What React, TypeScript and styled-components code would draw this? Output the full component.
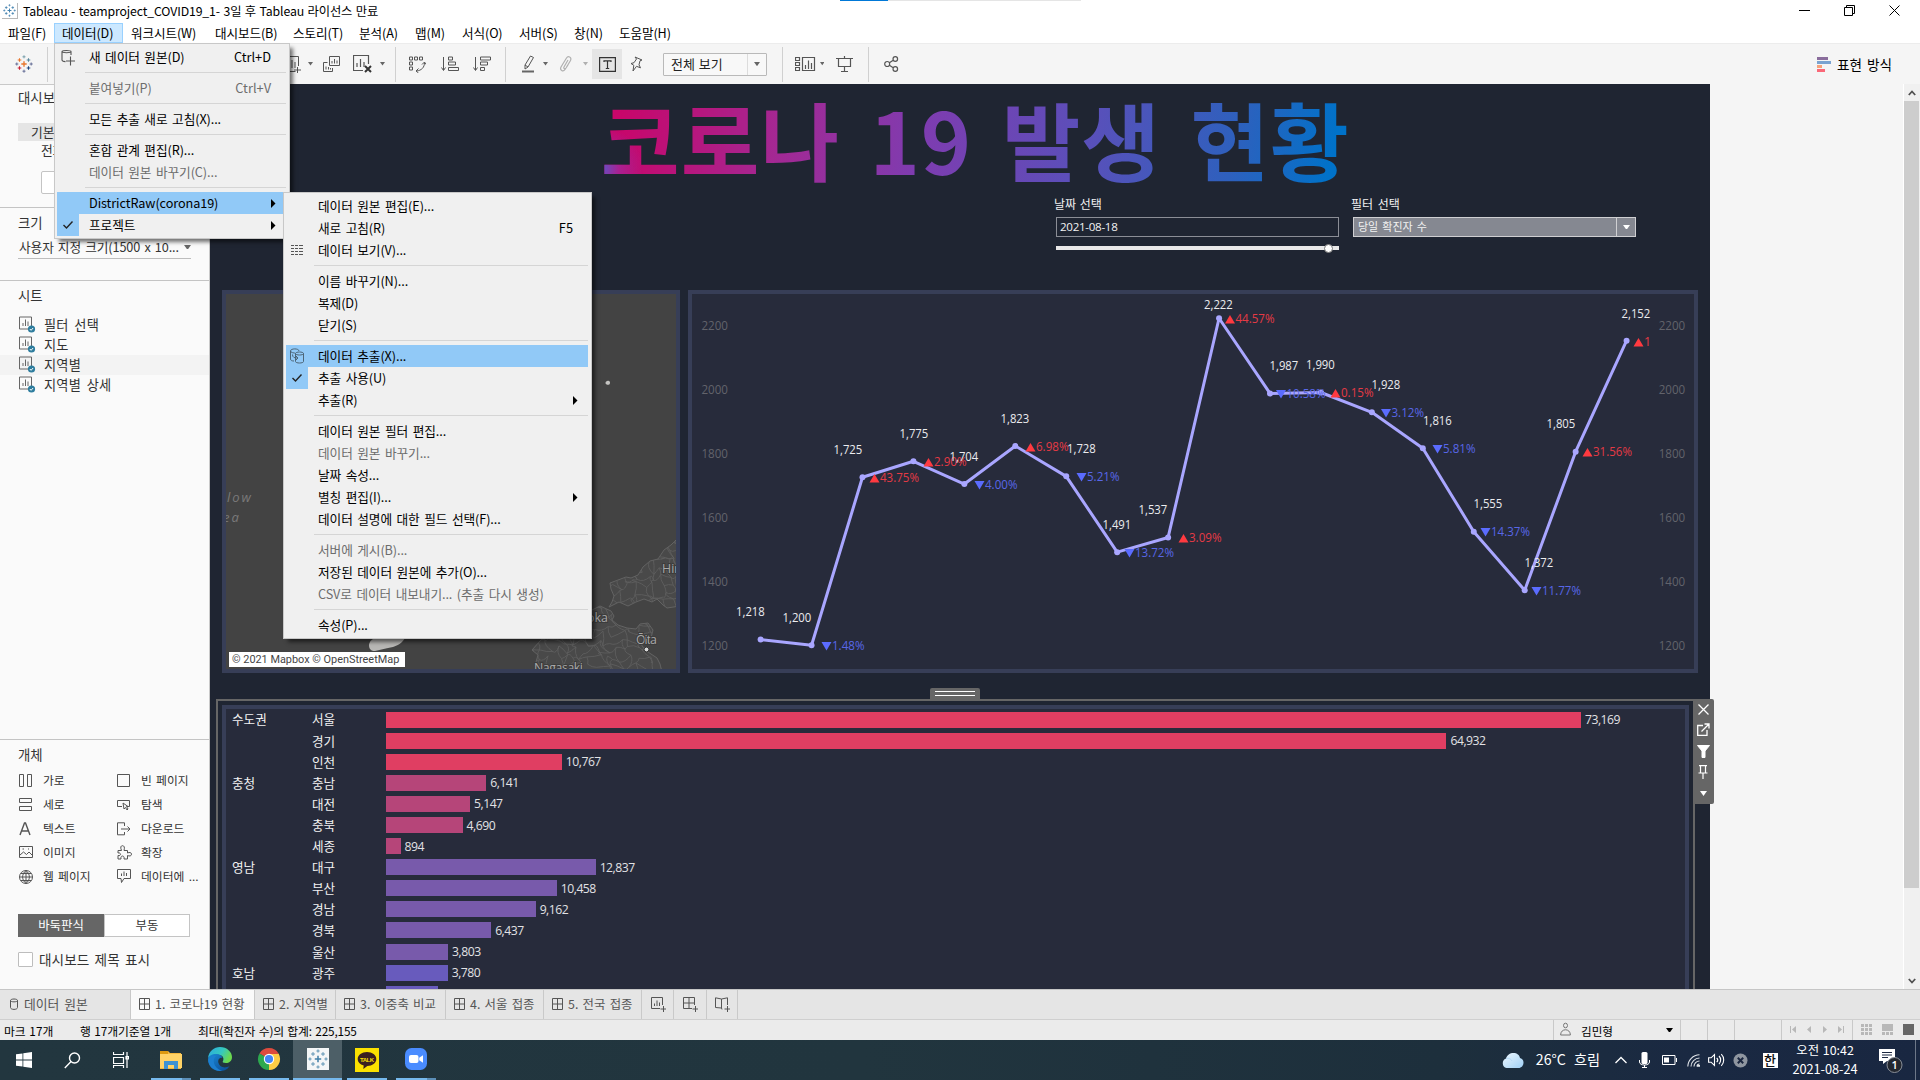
import React from "react";
import styled, { createGlobalStyle, css } from "styled-components";

const KR = `"Noto Sans CJK KR", "Open Sans", sans-serif`;
const NUM = `"Open Sans", "Noto Sans CJK KR", sans-serif`;

const Global = createGlobalStyle`
  * { box-sizing: border-box; }
  body { margin: 0; overflow: hidden; background: #fff; font-family: ${KR}; font-size: 13px; color: #000; }
  svg { display: block; flex: none; }
`;

const Screen = styled.div`
  position: relative;
  width: 1920px;
  height: 1080px;
  overflow: hidden;
  display: flex;
  flex-direction: column;
  white-space: nowrap;
`;

const Text = styled.span<{ $size?: number; $ls?: number; $ws?: number; $color?: string }>`
  font-size: ${(p) => p.$size ?? 13}px;
  letter-spacing: ${(p) => p.$ls ?? 0}px;
  word-spacing: ${(p) => p.$ws ?? 1}px;
  color: ${(p) => p.$color ?? "inherit"};
  line-height: 1.2;
  white-space: pre;
`;

/* ---------- title and menu bar ---------- */

const TitleBar = styled.header`
  height: 23px;
  flex: none;
  display: flex;
  align-items: center;
  background: #fff;
  padding: 0 0 1px 2px;
  gap: 5px;
`;
const LoadBar = styled.div`
  position: absolute;
  left: 840px;
  top: 0;
  width: 241px;
  height: 1px;
  background: linear-gradient(90deg, #0078d7 48px, #e5e5e5 48px);
`;
const WindowButtons = styled.div`
  margin-left: auto;
  display: flex;
  gap: 34px;
  padding: 0 20px 2px 0;
`;
const AppIcon = styled.div`
  padding: 1px;
  border-right: 1px solid #b8b8b8;
  border-bottom: 1px solid #b8b8b8;
`;
const MenuBar = styled.nav`
  height: 20px;
  flex: none;
  display: flex;
  background: #fff;
`;
const MenuTitle = styled.div<{ $w: number; $open?: boolean }>`
  width: ${(p) => p.$w}px;
  display: flex;
  align-items: center;
  padding-left: ${(p) => (p.$open ? 7 : 8)}px;
  ${(p) => p.$open && css`background: #cce8ff; border: 1px solid #99d1ff;`}
`;

/* ---------- toolbar ---------- */

const Toolbar = styled.div`
  height: 41px;
  flex: none;
  display: flex;
  align-items: center;
  background: #f5f5f5;
  border-top: 1px solid #ececec;
`;
const Tool = styled.div<{ $w: number; $active?: boolean }>`
  width: ${(p) => p.$w}px;
  height: 30px;
  flex: none;
  display: flex;
  align-items: center;
  justify-content: center;
  background: ${(p) => (p.$active ? "#e5e5e5" : "transparent")};
`;
const Rule = styled.div`
  width: 1px;
  height: 35px;
  flex: none;
  background: #d0d0d0;
`;
const ViewSelect = styled.div`
  width: 104px;
  height: 23px;
  flex: none;
  display: flex;
  align-items: center;
  justify-content: space-between;
  padding-left: 7px;
  border: 1px solid #b9b9b9;
  border-radius: 1px;
  background: #f8f8f8;
  color: #222;
`;
const SelectArrow = styled.div`
  width: 19px;
  height: 100%;
  display: flex;
  align-items: center;
  justify-content: center;
  border-left: 1px solid #dcdcdc;
`;
const ShowMe = styled.div`
  margin-left: auto;
  display: flex;
  align-items: center;
  gap: 6px;
  padding-right: 28px;
`;

/* ---------- sidebar ---------- */

const Main = styled.div`
  height: 905px;
  flex: none;
  display: flex;
  background: #f5f5f5;
`;
const Sidebar = styled.aside`
  width: 210px;
  flex: none;
  display: flex;
  flex-direction: column;
  background: #fafafa;
  border-right: 1px solid #c9c9c9;
  border-top: 1px solid #c9c9c9;
  color: #333;
`;
const Section = styled.section<{ $h: number }>`
  height: ${(p) => p.$h}px;
  flex: none;
  border-bottom: 1px solid #c4c4c4;
`;
const SectionTitle = styled.div<{ $h: number; $x?: number; $gap?: number }>`
  height: ${(p) => p.$h}px;
  display: flex;
  align-items: center;
  padding-left: ${(p) => p.$x ?? 18}px;
  margin-bottom: ${(p) => p.$gap ?? 0}px;
`;
const DeviceTab = styled.div`
  margin-left: 18px;
  width: 172px;
  height: 18px;
  display: flex;
  align-items: center;
  padding-left: 13px;
  background: #e5e5e5;
`;
const DeviceRow = styled.div`
  height: 17px;
  display: flex;
  align-items: center;
  padding-left: 41px;
`;
const DeviceButton = styled.div`
  margin: 13px 0 0 41px;
  width: 128px;
  height: 23px;
  border: 1px solid #c4c4c4;
  border-radius: 2px;
  background: #fff;
`;
const SizeSelect = styled.div`
  margin: 0 18px 0 18px;
  height: 20px;
  display: flex;
  align-items: center;
  justify-content: space-between;
  padding: 0 0 3px 1px;
  border-bottom: 1px solid #bdbdbd;
`;
const SheetRow = styled.div<{ $hover?: boolean }>`
  height: 20px;
  display: flex;
  align-items: center;
  gap: 8px;
  padding: 0 0 1px 19px;
  background: ${(p) => (p.$hover ? "#f3f3f3" : "transparent")};
`;
const ObjectGrid = styled.div`
  display: grid;
  grid-template-columns: 98px 92px;
  grid-auto-rows: 24px;
  padding-left: 19px;
`;
const ObjectItem = styled.div`
  display: grid;
  grid-template-columns: 24px 1fr;
  align-items: center;
  padding-bottom: 1px;
`;
const Toggle = styled.div`
  display: flex;
  margin: 25px 0 0 18px;
  width: 172px;
  height: 23px;
`;
const ToggleHalf = styled.div<{ $on?: boolean }>`
  flex: 1;
  display: flex;
  align-items: center;
  justify-content: center;
  border: 1px solid ${(p) => (p.$on ? "#666" : "#c4c4c4")};
  background: ${(p) => (p.$on ? "#666" : "#fff")};
  color: ${(p) => (p.$on ? "#fff" : "#333")};
`;
const CheckRow = styled.div`
  display: flex;
  align-items: center;
  gap: 6px;
  margin: 14px 0 0 18px;
`;
const CheckBox = styled.div`
  width: 15px;
  height: 15px;
  border: 1px solid #bdbdbd;
  border-radius: 1px;
  background: #fff;
`;

/* ---------- dashboard canvas ---------- */

const Canvas = styled.main`
  position: relative;
  width: 1500px;
  flex: none;
  display: flex;
  flex-direction: column;
  background: #1f2532;
`;
const Heading = styled.h1`
  margin: 0;
  height: 112px;
  padding: 6px 0 0 391px;
  font: 700 85.5px/96px ${KR};
  letter-spacing: 1px;
  word-spacing: 9px;
  span {
    display: inline-block;
    color: transparent;
    background: radial-gradient(circle at 0 78px, #5c55c8 0, rgba(150, 50, 170, 0.6) 18px, transparent 42px),
      linear-gradient(100deg, #c8066a 3%, #a42893 24%, #7e3cb0 43%, #5950ba 65%, #2e60bd 84%, #0072c9 97%);
    -webkit-background-clip: text;
    background-clip: text;
  }
`;
const Filters = styled.div`
  height: 94px;
  display: flex;
  gap: 14px;
  padding-left: 846px;
  color: #f2f2f2;
`;
const FilterBlock = styled.div`
  width: 283px;
  display: flex;
  flex-direction: column;
`;
const FilterLabel = styled.div`
  height: 21px;
  line-height: 16px;
  margin-left: -2px;
`;
const DateBox = styled.div`
  height: 20px;
  display: flex;
  align-items: center;
  padding: 0 0 1px 3px;
  border: 1px solid #8b8e96;
  font: 11.6px ${NUM};
  letter-spacing: -0.3px;
`;
const SliderTrack = styled.div`
  margin-top: 9px;
  height: 4px;
  display: flex;
  align-items: center;
  justify-content: flex-end;
  padding-right: 6px;
  background: #e8e8e8;
`;
const SliderThumb = styled.div`
  width: 9px;
  height: 9px;
  border: 1px solid #777;
  border-radius: 50%;
  background: #fff;
`;
const DropBox = styled.div`
  height: 20px;
  display: flex;
  align-items: center;
  justify-content: space-between;
  padding-left: 4px;
  border: 1px solid #cfcfd2;
  background: #858891;
`;
const DropArrow = styled.div`
  width: 19px;
  height: 100%;
  display: flex;
  align-items: center;
  justify-content: center;
  border-left: 1px solid #cfcfd2;
`;
const PanelRow = styled.div`
  display: flex;
  gap: 8px;
  padding-left: 12px;
  height: 383px;
  flex: none;
`;
const Panel = styled.section<{ $w: number; $bg: string }>`
  position: relative;
  width: ${(p) => p.$w}px;
  height: 383px;
  border: 4px solid #373e57;
  background: ${(p) => p.$bg};
  overflow: hidden;
`;
const Attribution = styled.div`
  position: absolute;
  left: 3px;
  bottom: 2px;
  width: 176px;
  height: 15px;
  padding-left: 3px;
  background: #fff;
  color: #444;
  font: 10.9px/15px Roboto, "Liberation Sans", sans-serif;
`;
const Selected = styled.section`
  position: relative;
  margin: 26px 0 0 6px;
  width: 1479px;
  flex: 1;
  border: 2px solid #666;
  border-bottom: 0;
  padding: 4px 4px 0;
  display: flex;
  min-height: 0;
`;
const Grip = styled.div`
  position: absolute;
  left: 712px;
  top: -13px;
  width: 50px;
  height: 12px;
  border-radius: 2px 2px 0 0;
  background: #666;
  display: flex;
  flex-direction: column;
  gap: 3px;
  padding: 3px 5px;
`;
const GripLine = styled.i`
  height: 1px;
  flex: none;
  background: #fff;
`;
const FloatBar = styled.div`
  position: absolute;
  left: 1475px;
  top: -2px;
  width: 21px;
  height: 105px;
  border-radius: 0 2px 2px 0;
  background: #666;
  display: flex;
  flex-direction: column;
  align-items: center;
  z-index: 1;
`;
const FloatSlot = styled.div`
  height: 21px;
  display: flex;
  align-items: center;
  padding-right: 1px;
`;
const BarPanel = styled.div`
  flex: 1;
  border: 4px solid #373e57;
  border-bottom: 0;
  background: #272b3b;
  overflow: hidden;
  color: #f2f2f2;
`;
const BarRow = styled.div`
  height: 21.1px;
  display: grid;
  grid-template-columns: 80px 80px 1fr;
  padding-left: 6px;
`;
const BarName = styled.div`
  display: flex;
  align-items: center;
  padding-bottom: 1px;
`;
const BarCell = styled.div`
  display: flex;
  align-items: center;
  gap: 4px;
  margin-left: -6px;
  font: 12.2px ${NUM};
  letter-spacing: -0.5px;
  color: #e2e2e5;
`;
const Bar = styled.div`
  height: 16px;
  flex: none;
`;

const Blank = styled.div`
  flex: 1;
`;
const ScrollBar = styled.div`
  width: 17px;
  flex: none;
  display: flex;
  flex-direction: column;
  align-items: center;
  background: #f0f0f0;
  border-left: 1px solid #fff;
  padding-right: 1px;
`;
const ScrollArrow = styled.div`
  height: 17px;
  display: flex;
  align-items: center;
`;
const ScrollThumb = styled.div`
  width: 15px;
  height: 787px;
  background: #cdcdcd;
`;

/* ---------- tabs and status ---------- */

const Tabs = styled.div`
  height: 31px;
  flex: none;
  display: flex;
  background: #e5e5e5;
  border-top: 1px solid #c6c6c6;
  border-bottom: 1px solid #cfcfcf;
  color: #555;
`;
const Tab = styled.div<{ $w: number; $on?: boolean; $pad?: number; $gap?: number }>`
  width: ${(p) => p.$w}px;
  display: flex;
  align-items: center;
  gap: ${(p) => p.$gap ?? 5}px;
  padding: 0 0 1px ${(p) => p.$pad ?? 8}px;
  border-right: 1px solid #c9c9c9;
  background: ${(p) => (p.$on ? "#fafafa" : "transparent")};
`;
const Status = styled.div`
  height: 20px;
  flex: none;
  display: flex;
  align-items: center;
  background: #ebebeb;
`;
const StatusText = styled.div<{ $w: number }>`
  width: ${(p) => p.$w}px;
`;
const StatusCell = styled.div<{ $w: number; $pad?: number; $gap?: number }>`
  width: ${(p) => p.$w}px;
  height: 20px;
  display: flex;
  align-items: center;
  gap: ${(p) => p.$gap ?? 0}px;
  padding-left: ${(p) => p.$pad ?? 0}px;
  border-left: 1px solid #c9c9c9;
`;

/* ---------- taskbar ---------- */

const TaskBar = styled.footer`
  height: 40px;
  flex: none;
  display: flex;
  color: #fff;
  background: linear-gradient(90deg, #22363f 0%, #21353e 45%, #1d2f3c 75%, #1a2942 88%, #192741 100%);
`;
const TaskSlot = styled.div<{ $w: number; $pad?: number }>`
  width: ${(p) => p.$w}px;
  display: flex;
  align-items: center;
  justify-content: center;
  padding-left: ${(p) => p.$pad ?? 0}px;
`;
const AppSlot = styled.div<{ $on?: boolean; $split?: boolean }>`
  width: 49px;
  height: 40px;
  display: flex;
  flex-direction: column;
  align-items: center;
  justify-content: space-between;
  padding-top: 6px;
  background: ${(p) => (p.$on ? "#4d5f67" : "transparent")};
  &::after {
    content: "";
    width: ${(p) => (p.$on ? 49 : 40)}px;
    height: 2px;
    background: ${(p) => (p.$split ? "linear-gradient(90deg, #76b9ed 31px, #5c8fb8 31px)" : "#76b9ed")};
  }
`;
const Tray = styled.div`
  margin-left: auto;
  display: flex;
`;
const Clock = styled.div`
  width: 70px;
  display: flex;
  flex-direction: column;
  align-items: center;
  justify-content: center;
  gap: 3px;
  padding-bottom: 1px;
`;
const ImeBox = styled.div`
  width: 15px;
  height: 15px;
  background: #fff;
  color: #111;
  font: 500 13px/14px ${KR};
  text-align: center;
`;
const ShowDesktop = styled.div`
  width: 5px;
  border-left: 1px solid #6d7788;
`;

/* ---------- drop-down menus ---------- */

const Popup = styled.div<{ $x: number; $y: number; $w: number }>`
  position: absolute;
  left: ${(p) => p.$x}px;
  top: ${(p) => p.$y}px;
  width: ${(p) => p.$w}px;
  padding: 2px;
  border: 1px solid #c8c8c8;
  background: #f0f0f0;
  box-shadow: 4px 4px 4px -1px rgba(0, 0, 0, 0.55);
  z-index: 5;
`;
const Item = styled.div<{ $on?: boolean; $off?: boolean; $sub?: boolean }>`
  height: 22px;
  display: grid;
  grid-template-columns: 22px 10px 1fr auto;
  align-items: center;
  padding-right: ${(p) => (p.$sub ? 10 : 15)}px;
  margin-right: 1px;
  background: ${(p) => (p.$on ? "#91c9f7" : "transparent")};
  color: ${(p) => (p.$off ? "#6d6d6d" : "#000")};
`;
const IconCell = styled.div<{ $on?: boolean }>`
  height: 22px;
  display: flex;
  align-items: center;
  justify-content: center;
  background: ${(p) => (p.$on ? "#91c9f7" : "transparent")};
`;
const ItemText = styled(Text)`
  grid-column: 3;
`;
const Separator = styled.div`
  height: 9px;
  padding: 4px 1px 4px 28px;
  &::after {
    content: "";
    display: block;
    height: 1px;
    background: #d5d5d5;
  }
`;

/* ---------- small drawings ---------- */

const Caret = ({ color = "#666", s = 6 }: { color?: string; s?: number }) => (
  <svg width={s} height={s * 0.7} viewBox="0 0 10 7">
    <path d="M0 0h10L5 7z" fill={color} />
  </svg>
);

const Plus = ({ x, y, r, c, w = 1 }: { x: number; y: number; r: number; c: string; w?: number }) => (
  <path d={`M${x - r} ${y}h${2 * r}M${x} ${y - r}v${2 * r}`} stroke={c} strokeWidth={w} />
);

const TableauMark = ({ size, mono }: { size: number; mono?: string }) => (
  <svg width={size} height={size} viewBox="0 0 20 20">
    <Plus x={10} y={10} r={3} c={mono ?? "#e8762c"} w={1.5} />
    <Plus x={5} y={5.5} r={2} c={mono ?? "#e8762c"} w={1.2} />
    <Plus x={15} y={5.5} r={2} c={mono ?? "#59879b"} w={1.2} />
    <Plus x={5} y={14.5} r={2} c={mono ?? "#c72035"} w={1.2} />
    <Plus x={15} y={14.5} r={2} c={mono ?? "#1f457e"} w={1.2} />
    <Plus x={10} y={2} r={1.7} c={mono ?? "#7199a6"} />
    <Plus x={10} y={18} r={1.7} c={mono ?? "#5b6591"} />
    <Plus x={2} y={10} r={1.7} c={mono ?? "#5b6591"} />
    <Plus x={18} y={10} r={1.7} c={mono ?? "#5b6591"} />
  </svg>
);

const Line = ({ w, h, d, c = "#555", sw = 1, fill = "none" }: { w: number; h: number; d: string; c?: string; sw?: number; fill?: string }) => (
  <svg width={w} height={h} viewBox={`0 0 ${w} ${h}`}>
    <path d={d} fill={fill} stroke={c} strokeWidth={sw} />
  </svg>
);

const Check = () => <Line w={12} h={10} c="#222" sw={1.4} d="M1.500 5l3 3L10.500 1.500" />;
const Arrow = () => (
  <svg width="5" height="9" viewBox="0 0 5 9">
    <path d="M0 0l4.500 4.500L0 9z" />
  </svg>
);

const SheetIcon = () => (
  <svg width="17" height="17" viewBox="0 0 17 17">
    <path d="M.5 1h12v12H.5zM4 10V7M6.500 10V3.500M9 10V5.500" fill="none" stroke="#666" />
    <circle cx="12.500" cy="13" r="3.600" fill="#2e7d9e" />
    <path d="M10.800 13l1.300 1.300 2-2.300" fill="none" stroke="#fff" />
  </svg>
);
const GridIcon = () => <Line w={11} h={12} d="M.5 .5h10v11H.5zM5.500 .5v11M.5 6h10" c="#555" />;

/* ---------- data ---------- */

const menuTitles: [string, number][] = [
  ["파일(F)", 54], ["데이터(D)", 69], ["워크시트(W)", 84], ["대시보드(B)", 78], ["스토리(T)", 66], ["분석(A)", 56],
  ["맵(M)", 47], ["서식(O)", 57], ["서버(S)", 55], ["창(N)", 45], ["도움말(H)", 70],
];

type Entry = { t: string; key?: string; off?: boolean; on?: boolean; icon?: React.ReactNode; sel?: boolean; sub?: boolean } | null;

const dataMenu: Entry[] = [
  { t: "새 데이터 원본(D)", key: "Ctrl+D", icon: <Line w={14} h={17} c="#555" sw={1.1} d="M10 6V2.500C10 1.200 1 1.200 1 2.500V11c0 1 1.500 1.500 3.500 1.600M1 2.600c0 1.500 9 1.500 9 0M9.500 7.500v9M5 12h9" /> },
  null,
  { t: "붙여넣기(P)", key: "Ctrl+V", off: true },
  null,
  { t: "모든 추출 새로 고침(X)..." },
  null,
  { t: "혼합 관계 편집(R)..." },
  { t: "데이터 원본 바꾸기(C)...", off: true },
  null,
  { t: "DistrictRaw(corona19)", on: true, sub: true },
  { t: "프로젝트", icon: <Check />, sel: true, sub: true },
];

const sourceMenu: Entry[] = [
  { t: "데이터 원본 편집(E)..." },
  { t: "새로 고침(R)", key: "F5" },
  { t: "데이터 보기(V)...", icon: <Line w={12} h={10} c="#555" d="M0 .5h3M4 .5h3M8 .5h4M0 3.500h3M4 3.500h3M8 3.500h4M0 6.500h3M4 6.500h3M8 6.500h4M0 9.500h3M4 9.500h3M8 9.500h4" /> },
  null,
  { t: "이름 바꾸기(N)..." },
  { t: "복제(D)" },
  { t: "닫기(S)" },
  null,
  { t: "데이터 추출(X)...", on: true, icon: <Line w={14} h={16} c="#4d6577" d="M9 3C9 .2 .5 .2 .5 3v8c0 1.500 1.500 2 3.500 2M.5 3C.5 5 5 5 5 5M5.500 5.500c0-2 8-2 8 0v8c0 2-8 2-8 0zM5.500 5.500c0 2 8 2 8 0M2.500 6.500c0 3 2 3.500 5 3.500M6 8l2 2-2 2" /> },
  { t: "추출 사용(U)", icon: <Check />, sel: true },
  { t: "추출(R)", sub: true },
  null,
  { t: "데이터 원본 필터 편집..." },
  { t: "데이터 원본 바꾸기...", off: true },
  { t: "날짜 속성..." },
  { t: "별칭 편집(I)...", sub: true },
  { t: "데이터 설명에 대한 필드 선택(F)..." },
  null,
  { t: "서버에 게시(B)...", off: true },
  { t: "저장된 데이터 원본에 추가(O)..." },
  { t: "CSV로 데이터 내보내기... (추출 다시 생성)", off: true },
  null,
  { t: "속성(P)..." },
];

const bars: [string, string, number, string][] = [
  ["수도권", "서울", 73169, "#e03e62"],
  ["", "경기", 64932, "#e03e62"],
  ["", "인천", 10767, "#e03e62"],
  ["충청", "충남", 6141, "#b64579"],
  ["", "대전", 5147, "#b64579"],
  ["", "충북", 4690, "#b64579"],
  ["", "세종", 894, "#b64579"],
  ["영남", "대구", 12837, "#785aab"],
  ["", "부산", 10458, "#785aab"],
  ["", "경남", 9162, "#785aab"],
  ["", "경북", 6437, "#785aab"],
  ["", "울산", 3803, "#785aab"],
  ["호남", "광주", 3780, "#685bbd"],
  ["", "", 3184, "#685bbd"],
];

// value, label x/y, change text, change x/y
const series: [number, number, number, string, number, number][] = [
  [1218, 736, 612, "", 0, 0],
  [1200, 782.5, 618, "▼1.48%", 822, 646],
  [1725, 833.5, 450, "▲43.75%", 870, 478],
  [1775, 899.5, 434, "▲2.90%", 924, 462],
  [1704, 949.5, 457, "▼4.00%", 975, 485],
  [1823, 1000.5, 419, "▲6.98%", 1026, 447],
  [1728, 1067, 449, "▼5.21%", 1077, 477],
  [1491, 1102.5, 525, "▼13.72%", 1125, 553],
  [1537, 1138.5, 510, "▲3.09%", 1179, 538],
  [2222, 1204, 305, "▲44.57%", 1225.5, 319],
  [1987, 1269.5, 366, "▼10.58%", 1276.5, 394],
  [1990, 1306, 365, "▲0.15%", 1331, 393],
  [1928, 1371.5, 385, "▼3.12%", 1381.5, 413],
  [1816, 1423, 421, "▼5.81%", 1433, 449],
  [1555, 1473.5, 504, "▼14.37%", 1481, 532],
  [1372, 1524.5, 563, "▼11.77%", 1532, 591],
  [1805, 1546.5, 424, "▲31.56%", 1583, 452],
  [2152, 1621.5, 314, "▲1", 1634, 342],
];

const pointX = (i: number) => 760.6 + i * 50.94;
const pointY = (v: number) => 645.3 - (v - 1200) * 0.32;

const ChartText = styled.text<{ $c: string }>`
  font: 12.3px ${NUM};
  fill: ${(p) => p.$c};
`;

const TrendChart = () => (
  <svg width="1002" height="375" viewBox="692 294 1002 375">
    {[2200, 2000, 1800, 1600, 1400, 1200].map((v) => (
      <g key={v}>
        <ChartText $c="#62636b" x={701.5} y={pointY(v) + 4.7} textLength={26.5} lengthAdjust="spacingAndGlyphs">{v}</ChartText>
        <ChartText $c="#62636b" x={1658.7} y={pointY(v) + 4.7} textLength={26.5} lengthAdjust="spacingAndGlyphs">{v}</ChartText>
      </g>
    ))}
    <polyline
      fill="none"
      stroke="#a9a6ff"
      strokeWidth="3"
      strokeLinejoin="round"
      points={series.map((s, i) => `${pointX(i)},${pointY(s[0])}`).join(" ")}
    />
    {series.map((s, i) => (
      <circle key={i} cx={pointX(i)} cy={pointY(s[0])} r="3" fill="#a9a6ff" />
    ))}
    {series.map(([v, x, y, change, cx, cy], i) => {
      const up = change[0] === "▲";
      const c = up ? "#e53a45" : "#5867e8";
      return (
        <g key={i}>
          {change && (
            <>
              <path d={up ? `M${cx - 0.5} ${cy + 4.500}h10l-5-8.500z` : `M${cx - 0.5} ${cy - 4}h10l-5 8.500z`} fill={up ? "#ff3a40" : "#5b6cff"} />
              <ChartText
                $c={c}
                x={cx + 10}
                y={cy + 4.3}
                textLength={change.length === 7 ? 39 : change.length === 6 ? 32.5 : undefined}
                lengthAdjust="spacingAndGlyphs"
              >
                {change.slice(1)}
              </ChartText>
            </>
          )}
          <ChartText $c="#ececef" x={x} y={y + 4} textLength={28.8} lengthAdjust="spacingAndGlyphs">
            {v.toLocaleString("en-US")}
          </ChartText>
        </g>
      );
    })}
  </svg>
);

// Deterministic jitter for the road mesh of the map.
const noise = (a: number, b: number) => {
  const n = Math.sin(a * 127.1 + b * 311.7) * 43758.5453;
  return n - Math.floor(n) - 0.5;
};
const roads = (() => {
  const step = 8;
  const at = (i: number, j: number) => [510 + i * step + noise(i, j) * 9, 530 + j * step + noise(j + 40, i) * 9];
  let d = "";
  for (let i = 0; i < 23; i++)
    for (let j = 0; j < 19; j++) {
      const [x, y] = at(i, j);
      if (noise(i, j + 90) > -0.3) {
        const [a, b] = at(i + 1, j);
        d += `M${x.toFixed(1)} ${y.toFixed(1)}Q${((x + a) / 2).toFixed(1)} ${(y + noise(j, i) * 8).toFixed(1)} ${a.toFixed(1)} ${b.toFixed(1)}`;
      }
      if (noise(i + 70, j) > -0.3) {
        const [a, b] = at(i + (noise(i, j) > 0.2 ? 1 : 0), j + 1);
        d += `M${x.toFixed(1)} ${y.toFixed(1)}Q${(x + noise(j + 9, i) * 8).toFixed(1)} ${((y + b) / 2).toFixed(1)} ${a.toFixed(1)} ${b.toFixed(1)}`;
      }
    }
  return d;
})();
const land =
  "M680 536L671 545L664 550L658 559L650 561L643 567L638 575L631 578L626 577L618 580L610 583L611 589L614 596L612 602L609 607L619 602L628 606L636 602L644 599L652 602L657 599L663 605L667 608L680 606Z" +
  "M532 650L540 641L552 630L566 620L580 610L590 611L600 606L611 611L614 616L612 620L618 625L627 628L636 629L640 624L648 623L653 630L651 638L644 640L641 644L645 650L651 654L657 658L660 664L662 672L540 672L536 662L538 655Z";

const MapLabel = styled.text`
  font: 12.4px ${NUM};
  fill: #a9a9a9;
  stroke: #3c3c3c;
  stroke-width: 2px;
  paint-order: stroke;
`;
const SeaLabel = styled.text`
  font: italic 13px ${NUM};
  letter-spacing: 2px;
  fill: #7a7a7a;
`;

const MapView = () => (
  <svg width="450" height="375" viewBox="226 294 450 375">
    <clipPath id="land"><path d={land} /></clipPath>
    <path d={land} fill="#494949" stroke="#636363" />
    <g clipPath="url(#land)">
      <path d={roads} fill="none" stroke="#616161" strokeWidth="0.8" />
    </g>
    <path d="M369 645c0-5 8-10 16-10h21c-1 5-6 10-13 12-7 1-12 3-18 4-4 0-6-2-6-6z" fill="#b8b7b5" />
    <path d="M605.500 383c0-1.500 1.500-2.500 3-2.200s1.800 1.500 1.300 3-4.300 1.200-4.300-.8z" fill="#c4c3c1" />
    <SeaLabel x="227" y="502">low</SeaLabel>
    <SeaLabel x="223" y="522">ea</SeaLabel>
    <MapLabel x="662" y="573">Hir</MapLabel>
    <MapLabel x="587" y="622">oka</MapLabel>
    <MapLabel x="636" y="643.500" textLength="21">Ōita</MapLabel>
    <MapLabel x="534" y="672" textLength="49">Nagasaki</MapLabel>
    <circle cx="646.500" cy="649.500" r="2.400" fill="#d8d8d8" stroke="#333" />
  </svg>
);

const renderMenu = (entries: Entry[]) =>
  entries.map((e, i) =>
    e ? (
      <Item key={i} $on={e.on} $off={e.off} $sub={e.sub}>
        <IconCell $on={e.sel}>{e.icon}</IconCell>
        <ItemText $size={12.7} $ls={-0.1} $ws={1.8}>{e.t}</ItemText>
        {e.key && <Text $size={12.8}>{e.key}</Text>}
        {e.sub && <Arrow />}
      </Item>
    ) : (
      <Separator key={i} />
    ),
  );

const objects: [string, React.ReactNode][] = [
  ["가로", <Line w={13} h={14} d="M.5 .5h4v12h-4zM8.500 .5h4v12h-4z" />],
  ["빈 페이지", <Line w={13} h={14} d="M.5 .5h12v12H.5z" />],
  ["세로", <Line w={13} h={14} d="M.5 .5h12v4H.5zM.5 8.500h12v4H.5z" />],
  ["탐색", <Line w={14} h={12} d="M5 7.500H.5v-6h12v6H11M6 4l1 6 1.500-1.500L10 11l1-1-1.500-2.500H11z" />],
  ["텍스트", <Line w={12} h={14} sw={1.4} d="M1 13L5.500 1h1L11 13M3 9h6" />],
  ["다운로드", <Line w={14} h={14} d="M7.500 4V.8h-7v12h7V10M4 7h9M10.500 4.500L13 7l-2.500 2.500" />],
  ["이미지", <Line w={14} h={13} d="M.5 .5h13v11H.5zM1 9l3.500-3 3 2.500L10 6l3 3M3.500 3h1.500M9 3h1" />],
  ["확장", <Line w={15} h={15} d="M1 5.500h3.500C3 2 4 .7 5.500 .7S8 2 7 5.500h3.500V8c2-1 4-.5 4 1.200S12.500 11.500 10.500 10.500V14H7c.5-2-.5-3-1.500-3S3.500 12 4 14H1v-3.500c2 .5 2.500-.5 2.500-1.300S2.500 7.500 1 8z" />],
  ["웹 페이지", <Line w={14} h={14} d="M.5 7a6.500 6.500 0 1 0 13 0a6.500 6.500 0 1 0-13 0zM7 .5v13M.5 7h13M2 3.500h10M2 10.500h10M7 .5C2.500 4 2.500 10 7 13.500M7 .5c4.500 3.500 4.500 9.500 0 13" />],
  ["데이터에 ...", <Line w={14} h={15} d="M.5 .5h13v9H7L4.500 13.500 4 9.500H.5zM4.500 7V4.500M7 7V2.500M9.500 7V4" />],
];

const tabs: [string, number][] = [
  ["1. 코로나19 현황", 124], ["2. 지역별", 81], ["3. 이중축 비교", 110], ["4. 서울 접종", 98], ["5. 전국 접종", 98],
];

export default function App() {
  return (
    <Screen>
      <Global />
      <LoadBar />
      <TitleBar>
        <AppIcon><TableauMark size={13} mono="#3f7fae" /></AppIcon>
        <Text $size={12.3} $ls={-0.13} $ws={0.9}>Tableau - teamproject_COVID19_1- 3일 후 Tableau 라이선스 만료</Text>
        <WindowButtons>
          <Line w={11} h={11} c="#000" d="M0 5.500h11" />
          <Line w={11} h={11} c="#000" d="M.5 2.500h8v8h-8zM2.500 2.500v-2h8v8h-2" />
          <Line w={11} h={11} c="#000" d="M.5 .5l10 10M10.500 .5l-10 10" />
        </WindowButtons>
      </TitleBar>
      <MenuBar>
        {menuTitles.map(([t, w], i) => (
          <MenuTitle key={t} $w={w} $open={i === 1}>
            <Text $size={12.6} $ls={-0.1}>{t}</Text>
          </MenuTitle>
        ))}
      </MenuBar>

      <Toolbar>
        <Tool $w={47}><TableauMark size={18} /></Tool>
        <Rule />
        <Tool $w={236} />
        <Tool $w={18}><Line w={16} h={17} d="M10.500 15.500H.5V.5h13V10M4 12V8M7 12V4M10 12V6M12.500 11v6M9 14h7" /></Tool>
        <Tool $w={16}><Caret s={5} /></Tool>
        <Tool $w={27}><Line w={17} h={17} d="M6.500 .5h10v9h-10zM4.500 6.500h-4v9h9V12M9 7.500V5M11.500 7.500V3M14 7.500V4.500M3 13.500v-3M5.500 13.500V11M7.500 13.500V12" /></Tool>
        <Tool $w={34}>
          <svg width="19" height="18" viewBox="0 0 19 18">
            <path d="M10 15.500H.5V.5h15V9M4 12V8M7.500 12V4M11 12V7" fill="none" stroke="#555" strokeWidth="1.200" />
            <path d="M12 11l6 6M18 11l-6 6" stroke="#333" strokeWidth="2" />
          </svg>
        </Tool>
        <Tool $w={7}><Caret s={5} /></Tool>
        <Tool $w={9} />
        <Rule />
        <Tool $w={43}><Line w={17} h={17} d="M.5 1h3v3h-3zM5.500 1h3v3h-3zM10.500 1h3v3h-3zM.5 6h3v3h-3zM.5 11h3v3h-3zM15.500 6.500c0 5-3 8-8 8.500M13 8.500l2.500-2.500 1.500 2.500M9.500 12.500L7 15l2.500 2" /></Tool>
        <Tool $w={22}><Line w={18} h={16} d="M2.500 1v13M.5 11.500l2 3 2-3M7.500 1h4v3h-4zM7.500 6h7v3h-7zM7.500 11.500h10v3h-10z" /></Tool>
        <Tool $w={42}><Line w={18} h={16} d="M2.500 1v13M.5 11.500l2 3 2-3M7.500 1h10v3h-10zM7.500 6h7v3h-7zM7.500 11.500h4v3h-4z" /></Tool>
        <Tool $w={2} />
        <Rule />
        <Tool $w={10} />
        <Tool $w={24}>
          <svg width="13" height="18" viewBox="0 0 13 18">
            <path d="M3 10L8.500 1l3 1.500L6 12l-3 2zM3 10l3 2" fill="none" stroke="#555" />
            <path d="M0 16.500h12" stroke="#666" strokeWidth="2" />
          </svg>
        </Tool>
        <Tool $w={11}><Caret s={5} /></Tool>
        <Tool $w={28}><Line w={13} h={16} c="#b0b0b0" sw={1.200} d="M9 4L5 11c-.8 1.500 1 2.500 2 1l4.500-7.500C13 1 9 -.5 7.500 2L2 11c-1.500 3 2 5.500 4 2.500L9 9" /></Tool>
        <Tool $w={12}><Caret s={5} color="#b0b0b0" /></Tool>
        <Tool $w={1} />
        <Tool $w={30} $active><Line w={17} h={15} c="#333" sw={1.200} d="M.6 .6h15.800v13.800H.6zM5 5V3.800h7V5M8.500 4v7.500M6.800 11.500h3.400" /></Tool>
        <Tool $w={28}><Line w={13} h={16} d="M5 1l7 3-2 .8-1 4 1.500 3-4-1.500L3 15l.8-5.700L1 7.500l3-.8L6.500 3z" /></Tool>
        <Tool $w={13} />
        <ViewSelect>
          <Text $size={13}>전체 보기</Text>
          <SelectArrow><Caret s={6} /></SelectArrow>
        </ViewSelect>
        <Tool $w={15} />
        <Rule />
        <Tool $w={8} />
        <Tool $w={28}><Line w={21} h={15} d="M.5 .5h4v3h-4zM.5 5.500h4v3h-4zM.5 10.500h4v3h-4zM7.500 .5h12v13h-12zM10.500 12V8M13.500 12V3.500M16.500 12V6" sw={1.200} /></Tool>
        <Tool $w={6}><Caret s={4.5} /></Tool>
        <Tool $w={39}><Line w={18} h={17} sw={1.200} d="M0 2.500h17M2.500 2.500v8h12v-8M8.500 0v2M8.500 10.500v5M5 15.500h7" /></Tool>
        <Tool $w={4} />
        <Rule />
        <Tool $w={44}><Line w={15} h={16} sw={1.200} d="M.7 8a2.500 2.500 0 1 0 5 0a2.500 2.500 0 1 0-5 0M9 3a2.300 2.300 0 1 0 4.600 0a2.300 2.300 0 1 0-4.600 0M9 13a2.300 2.300 0 1 0 4.600 0a2.300 2.300 0 1 0-4.600 0M5.400 6.800L9.200 4.200M5.400 9.200l3.800 2.600" /></Tool>
        <ShowMe>
          <svg width="14" height="15" viewBox="0 0 14 15">
            <path d="M0 0h11v3H0z" fill="#8a6d9c" />
            <path d="M0 4h14v3H0z" fill="#7aa3d0" />
            <path d="M0 8h5v3H0z" fill="#f5a27a" />
            <path d="M0 12h8v3H0z" fill="#fa6878" />
          </svg>
          <Text $size={13.6} $ws={2}>표현 방식</Text>
        </ShowMe>
      </Toolbar>

      <Main>
        <Sidebar>
          <Section $h={123}>
            <SectionTitle $h={25} $gap={13}><Text $size={13.4}>대시보드</Text></SectionTitle>
            <DeviceTab><Text $size={12.8}>기본</Text></DeviceTab>
            <DeviceRow><Text $size={12.8}>전화</Text></DeviceRow>
            <DeviceButton />
          </Section>
          <Section $h={73}>
            <SectionTitle $h={29} $gap={2}><Text $size={13.4}>크기</Text></SectionTitle>
            <SizeSelect>
              <Text $size={12.7} $ls={-0.1} $ws={1.4}>사용자 지정 크기(1500 x 10...</Text>
              <Caret s={7} />
            </SizeSelect>
          </Section>
          <Section $h={459}>
            <SectionTitle $h={28} $gap={6}><Text $size={13.4}>시트</Text></SectionTitle>
            {["필터 선택", "지도", "지역별", "지역별 상세"].map((t, i) => (
              <SheetRow key={t} $hover={i === 2}>
                <SheetIcon />
                <Text $size={13.2} $ls={0.2} $ws={2.5}>{t}</Text>
              </SheetRow>
            ))}
          </Section>
          <SectionTitle $h={28} $gap={1}><Text $size={13.4}>개체</Text></SectionTitle>
          <ObjectGrid>
            {objects.map(([t, icon]) => (
              <ObjectItem key={t}>
                {icon}
                <Text $size={11.8} $ws={1.6}>{t}</Text>
              </ObjectItem>
            ))}
          </ObjectGrid>
          <Toggle>
            <ToggleHalf $on><Text $size={12.4}>바둑판식</Text></ToggleHalf>
            <ToggleHalf><Text $size={12.4}>부동</Text></ToggleHalf>
          </Toggle>
          <CheckRow>
            <CheckBox />
            <Text $size={13.6} $ls={0.1} $ws={2}>대시보드 제목 표시</Text>
          </CheckRow>
        </Sidebar>

        <Canvas>
          <Heading><span>코로나 19 발생 현황</span></Heading>
          <Filters>
            <FilterBlock>
              <FilterLabel><Text $size={12}>날짜 선택</Text></FilterLabel>
              <DateBox>2021-08-18</DateBox>
              <SliderTrack><SliderThumb /></SliderTrack>
            </FilterBlock>
            <FilterBlock>
              <FilterLabel><Text $size={12} $ws={2}>필터 선택</Text></FilterLabel>
              <DropBox>
                <Text $size={11} $ws={1.6}>당일 확진자 수</Text>
                <DropArrow><Caret color="#fff" s={7} /></DropArrow>
              </DropBox>
            </FilterBlock>
          </Filters>
          <PanelRow>
            <Panel $w={458} $bg="#434343">
              <MapView />
              <Attribution>© 2021 Mapbox © OpenStreetMap</Attribution>
            </Panel>
            <Panel $w={1010} $bg="#272b3b"><TrendChart /></Panel>
          </PanelRow>
          <Selected>
            <Grip><GripLine /><GripLine /></Grip>
            <BarPanel>
              {bars.map(([group, name, v, color], i) => (
                <BarRow key={i}>
                  <BarName><Text $size={12.6}>{group}</Text></BarName>
                  <BarName><Text $size={12.6}>{name}</Text></BarName>
                  <BarCell>
                    <Bar style={{ width: v * 0.016332, background: color }} />
                    {name && v.toLocaleString("en-US")}
                  </BarCell>
                </BarRow>
              ))}
            </BarPanel>
            <FloatBar>
              <FloatSlot><Line w={11} h={11} c="#fff" sw={1.300} d="M.5 .5l10 10M10.500 .5l-10 10" /></FloatSlot>
              <FloatSlot><Line w={13} h={15} c="#fff" sw={1.300} d="M6 2.500H.7v9.800h9.300V7M4.500 8.500L11.500 1.500M7.500 1h4.500v4.500" /></FloatSlot>
              <FloatSlot><Line w={13} h={13} c="#fff" fill="#fff" d="M.5 .5h12L8 6v6.500H5V6z" /></FloatSlot>
              <FloatSlot><Line w={10} h={15} c="#fff" sw={1.200} d="M1 .6h8M2.500 .6v7M7.500 .6v7M.5 8h9M5 8v6" /></FloatSlot>
              <FloatSlot><Caret color="#fff" s={7} /></FloatSlot>
            </FloatBar>
          </Selected>
        </Canvas>
        <Blank />
        <ScrollBar>
          <ScrollArrow><Line w={8} h={6} c="#505050" sw={1.800} d="M.8 5L4 1.500 7.200 5" /></ScrollArrow>
          <ScrollThumb />
          <Blank />
          <ScrollArrow><Line w={8} h={6} c="#505050" sw={1.800} d="M.8 1L4 4.500 7.200 1" /></ScrollArrow>
        </ScrollBar>
      </Main>

      <Tabs>
        <Tab $w={131} $gap={6}>
          <Line w={10} h={14} d="M2.500 3.500v7c0 2.500 7 2.500 7 0v-7c0-2-7-2-7 0zM2.500 3.500c0 1.800 7 1.800 7 0" />
          <Text $size={12.8} $ws={2}>데이터 원본</Text>
        </Tab>
        {tabs.map(([t, w], i) => (
          <Tab key={t} $w={w} $on={i === 0}>
            <GridIcon />
            <Text $size={12.4} $ws={1.5}>{t}</Text>
          </Tab>
        ))}
        <Tab $w={32}><Line w={16} h={15} d="M10 11.500H1.500V.5h11V8M4.500 9V6.500M7 9V3.500M9.500 9V5.500M13.500 9v6M10.500 12h6" /></Tab>
        <Tab $w={33}><Line w={16} h={15} d="M10 11.500H1.500V.5h11V8M7 .5v11M1.500 6h11M13.500 9v6M10.500 12h6" /></Tab>
        <Tab $w={31}><Line w={15} h={15} d="M7 12.500L6.500 11 .5 10.500V.8L6.500 2l6-1.200V8M6.500 2v9M12.500 9v6M9.500 12h6" /></Tab>
      </Tabs>

      <Status>
        <StatusText $w={4} />
        <StatusText $w={76}><Text $size={11.8}>마크 17개</Text></StatusText>
        <StatusText $w={118}><Text $size={11.8} $ls={-0.1}>행 17개기준열 1개</Text></StatusText>
        <StatusText $w={1355}><Text $size={11.8} $ls={-0.17}>최대(확진자 수)의 합계: 225,155</Text></StatusText>
        <StatusCell $w={127} $pad={6} $gap={10}>
          <Line w={11} h={16} c="#777" d="M3.500 3.500a2 2.300 0 1 0 4 0a2 2.300 0 1 0-4 0M.6 13c0-7 9.800-7 9.800 0z" />
          <StatusText $w={75}><Text $size={11.6}>김민형</Text></StatusText>
          <Caret color="#000" s={7} />
        </StatusCell>
        <StatusCell $w={27} />
        <StatusCell $w={27} />
        <StatusCell $w={47} />
        <StatusCell $w={71} $pad={8}>
          <svg width="56" height="10" viewBox="0 0 56 10" fill="#b8b8b8">
            <path d="M0 1h1v7H0zM6 1v7L2 4.500zM21 1v7l-4-3.500zM33 1v7l4-3.500zM48 1v7l4-3.500zM53 1h1v7h-1z" />
          </svg>
        </StatusCell>
        <StatusCell $w={68} $pad={8}>
          <svg width="54" height="12" viewBox="0 0 54 12" fill="#b8b8b8">
            {[0, 4, 8].map((x) => [0, 4, 8].map((y) => <rect key={`${x}-${y}`} x={x} y={y} width="3" height="3" />))}
            <path d="M21 0h11v7H21zM21 8h3v3h-3zM25 8h3v3h-3zM29 8h3v3h-3z" />
            <path d="M42 0h11v11H42z" fill="#666" />
          </svg>
        </StatusCell>
      </Status>

      <TaskBar>
        <TaskSlot $w={48}>
          <svg width="16" height="16" viewBox="0 0 16 16"><path fill="#fff" d="M0 2.300l6.500-.9v6.200H0zM7.300 1.300L16 0v7.600H7.300zM0 8.400h6.500v6.200L0 13.700zM7.300 8.400H16V16l-8.700-1.300z" /></svg>
        </TaskSlot>
        <TaskSlot $w={48}><Line w={17} h={17} c="#fff" sw={1.400} d="M5.500 6a5 5 0 1 0 10 0a5 5 0 1 0-10 0M6.800 9.800L.8 16" /></TaskSlot>
        <TaskSlot $w={50}><Line w={16} h={16} c="#fff" sw={1.200} d="M.5 0v2.500h10V0M.5 5.500h10v6H.5zM.5 16v-2.500h10V16M14 0v16M13 4.500h2.500v2.500H13z" /></TaskSlot>
        <AppSlot $split>
          <svg width="24" height="26" viewBox="0 0 24 26">
            <path d="M1 5h8l2 2h11v16H1z" fill="#f5b83d" />
            <path d="M1 5h8v3H1z" fill="#dd9a10" />
            <path d="M1 8h22v14H1z" fill="#ffd367" />
            <path d="M5 23v-8h14v8h-4v-4h-6v4z" fill="#3e92d2" />
          </svg>
        </AppSlot>
        <AppSlot>
          <svg width="24" height="26" viewBox="0 0 24 26">
            <defs>
              <linearGradient id="eg" x1="0" y1="0" x2="1" y2=".4"><stop offset="0" stopColor="#2aa9e0" /><stop offset=".6" stopColor="#35c8c0" /><stop offset="1" stopColor="#6bd94f" /></linearGradient>
              <linearGradient id="eb" x1="0" y1="0" x2="1" y2="1"><stop offset="0" stopColor="#1a8ad6" /><stop offset="1" stopColor="#0b4a94" /></linearGradient>
            </defs>
            <path d="M0 12C1 5 6 1 12 1c7 0 12 5 12 10 0 4-3 6-6 6-3 0-4-1-3-2 1-2 .5-5-3-6-5-1-10 0-12 3z" fill="url(#eg)" />
            <path d="M0 13c1-4 5-5.500 9-5 3 .3 5 2 5.500 4-3-1-5 2-4 5 1 4 6 6 11 3-2 4-6 5-9.500 5C5 25 0 20 0 13z" fill="url(#eb)" />
            <path d="M8 10c-4 3-3 12 6 14.800-8 1-13-4-13.700-10C2 10 5 9 8 10z" fill="#1c7fd0" />
          </svg>
        </AppSlot>
        <AppSlot>
          <svg width="24" height="26" viewBox="0 0 24 26">
            <path d="M12 13L2.470 7.500A11 11 0 0 1 21.530 7.500z" fill="#dd4b3e" />
            <path d="M12 13L21.530 7.500A11 11 0 0 1 12 24z" fill="#fdcd45" />
            <path d="M12 13L12 24A11 11 0 0 1 2.470 7.500z" fill="#2da94f" />
            <path d="M12 8h9.800L17 16l-5 8z" fill="#fdcd45" />
            <circle cx="12" cy="13" r="5.200" fill="#fff" />
            <circle cx="12" cy="13" r="4.100" fill="#4386f5" />
          </svg>
        </AppSlot>
        <AppSlot $on>
          <svg width="22" height="26" viewBox="0 0 22 26">
            <path d="M0 2h22v22H0z" fill="#f4f6f7" />
            <g fill="none">
              <Plus x={11} y={13} r={3.2} c="#3f7fa8" w={1.500} />
              <Plus x={6} y={8} r={1.900} c="#5e94b4" />
              <Plus x={16} y={8} r={1.900} c="#5e94b4" />
              <Plus x={6} y={18} r={1.900} c="#5e94b4" />
              <Plus x={16} y={18} r={1.900} c="#5e94b4" />
              <Plus x={11} y={5} r={1.600} c="#5e94b4" />
              <Plus x={11} y={21} r={1.600} c="#5e94b4" />
              <Plus x={3} y={13} r={1.600} c="#5e94b4" />
              <Plus x={19} y={13} r={1.600} c="#5e94b4" />
            </g>
          </svg>
        </AppSlot>
        <AppSlot>
          <svg width="24" height="26" viewBox="0 0 24 26">
            <path d="M0 2h24v24H0z" fill="#fbe100" />
            <path d="M12 6c5.200 0 9.300 3 9.300 7s-4 7-9 7l-4 3 .4-3.600C5 18.500 2.700 16 2.700 13c0-4 4.200-7 9.300-7z" fill="#3a2020" />
            <text x="5" y="15.500" fontFamily="Liberation Sans, sans-serif" fontWeight="700" fontSize="6" textLength="14" fill="#fbe100">TALK</text>
          </svg>
        </AppSlot>
        <AppSlot $split>
          <svg width="22" height="26" viewBox="0 0 22 26">
            <rect y="2" width="22" height="22" rx="6.500" fill="#4a8cff" />
            <rect x="4" y="9" width="9.500" height="8" rx="2" fill="#fff" />
            <path d="M14.200 11.800L18 9.200v7.600l-3.800-2.600z" fill="#fff" />
          </svg>
        </AppSlot>
        <Tray>
          <TaskSlot $w={34}>
            <svg width="23" height="17" viewBox="0 0 23 17">
              <defs><linearGradient id="cl" x1="0" y1="0" x2="1" y2="1"><stop offset="0" stopColor="#eef8ff" /><stop offset="1" stopColor="#9fd0f5" /></linearGradient></defs>
              <path d="M5.500 16a5 5 0 0 1-.5-9.500C6 3 9 1 12.500 1 16 1 18.500 3 19 6c2.500.5 3.500 2.500 3.500 4.500 0 3-2 5.500-5 5.500z" fill="url(#cl)" />
              <path d="M5 6.500c3-1 5 .5 6 2.500" stroke="#b5daf6" fill="none" />
            </svg>
          </TaskSlot>
          <TaskSlot $w={78} $pad={-0}><Text $size={14.2} $ws={5}>26°C 흐림</Text></TaskSlot>
          <TaskSlot $w={28}><Line w={12} h={8} c="#fff" sw={1.300} d="M.5 7L6 1.500 11.500 7" /></TaskSlot>
          <TaskSlot $w={19}>
            <svg width="11" height="16" viewBox="0 0 11 16">
              <rect x="2.500" width="6" height="12" rx="1.500" fill="#fff" />
              <path d="M.5 8v2c0 4 10 4 10 0V8M5.500 13v2.500M3 15.500h5" fill="none" stroke="#fff" />
            </svg>
          </TaskSlot>
          <TaskSlot $w={31}>
            <svg width="15" height="10" viewBox="0 0 15 10">
              <path d="M.5 .5h12.500v9H.5zM14.500 3v4" fill="none" stroke="#fff" />
              <path d="M2 2.500h5v5H2z" fill="#fff" />
            </svg>
          </TaskSlot>
          <TaskSlot $w={17}><Line w={13} h={13} c="#dfe3e8" sw={1.100} d="M.8 12.500C1 6 6 1 12.500 .8M4 12.500C4 8 8 4 12.500 4M7 12.500c0-3 2.500-5.500 5.500-5.500M10 12.500c0-1.500 1-2.500 2.500-2.500M11 11.500h2v1.500h-2z" /></TaskSlot>
          <TaskSlot $w={29}><Line w={17} h={14} c="#fff" sw={1.100} d="M.6 4.800h2.500L6.500 1.500v11L3.100 9.200H.6zM8.700 4.800c1.200 1.200 1.200 3.200 0 4.400M11 3c2.200 2.200 2.200 5.800 0 8M13.300 1.200c3.200 3.200 3.200 8.400 0 11.600" /></TaskSlot>
          <TaskSlot $w={19}>
            <svg width="15" height="15" viewBox="0 0 15 15">
              <circle cx="7.500" cy="7.500" r="7" fill="#8f96a0" />
              <path d="M4.800 4.800l5.400 5.400M10.200 4.800l-5.400 5.400" stroke="#1b2740" strokeWidth="2" />
            </svg>
          </TaskSlot>
          <TaskSlot $w={40}><ImeBox>한</ImeBox></TaskSlot>
          <Clock>
            <Text $size={12.4}>오전 10:42</Text>
            <Text $size={12.8} $ls={-0.05}>2021-08-24</Text>
          </Clock>
          <TaskSlot $w={55} $pad={9}>
            <svg width="26" height="26" viewBox="0 0 26 26">
              <path d="M0 2h16v12H8l-4 3v-3H0z" fill="#fff" />
              <path d="M3 5.500h10M3 8h10M3 10.500h6" stroke="#1b2740" />
              <circle cx="15.500" cy="18" r="7.500" fill="#23272f" stroke="#8a8f98" />
              <text x="12.500" y="22.200" fontFamily="Open Sans, sans-serif" fontWeight="600" fontSize="11" fill="#fff">1</text>
            </svg>
          </TaskSlot>
          <ShowDesktop />
        </Tray>
      </TaskBar>

      <Popup $x={54} $y={43} $w={236}>{renderMenu(dataMenu)}</Popup>
      <Popup $x={283} $y={192} $w={309}>{renderMenu(sourceMenu)}</Popup>
    </Screen>
  );
}
